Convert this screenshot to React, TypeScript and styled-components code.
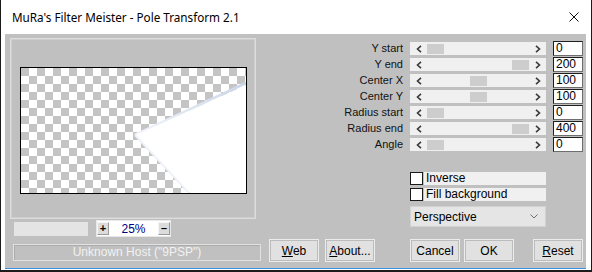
import { Fragment } from 'react';
import styled, { createGlobalStyle } from 'styled-components';

const GlobalStyle = createGlobalStyle`
    html, body {
        margin: 0;
        padding: 0;
        background: #ffffff;
    }
    body {
        font-family: 'Liberation Sans', Arial, sans-serif;
    }
`;

const UI_FONT = `'Liberation Sans', Arial, sans-serif`;

const Window = styled.div`
    width: 592px;
    height: 272px;
    box-sizing: border-box;
    background: #ffffff;
    border: 1px solid #1b1b1b;
    border-top: none;
    border-bottom-width: 2px;
    display: flex;
    flex-direction: column;
`;

const TitleBar = styled.div`
    height: 34px;
    flex: none;
    display: flex;
    align-items: center;
    justify-content: space-between;
    padding: 0 12px 0 11px;
`;

const Title = styled.div`
    font-family: 'Noto Sans', 'Open Sans', sans-serif;
    font-size: 11.7px;
    color: #000000;
`;

const Client = styled.div`
    margin: 0 5px 0 4px;
    height: 230px;
    flex: none;
    background: #c0c0c0;
    border-bottom: 1px solid #3c8edf;
    display: flex;
    flex-direction: column;
    padding-top: 4px;
    box-sizing: content-box;
    font-family: ${UI_FONT};
    font-size: 11px;
    color: #000000;
`;

const Upper = styled.div`
    display: flex;
    height: 199px;
    flex: none;
`;

const LeftPane = styled.div`
    width: 257px;
    box-sizing: border-box;
    padding-left: 5px;
    display: flex;
    flex-direction: column;
`;

const PreviewFrame = styled.div`
    width: 246px;
    height: 182px;
    box-sizing: border-box;
    border: 1px solid #dcdcdc;
    box-shadow: inset 1px 1px 0 #cdcdcd, inset -1px -1px 0 #cdcdcd;
    padding: 28px 0 0 9px;
`;

const Canvas = styled.div`
    width: 227px;
    height: 127px;
    box-sizing: border-box;
    border: 1px solid #000000;
    background-color: #ffffff;
    background-image: conic-gradient(#ffffff 25%, #c4c4c4 0 50%, #ffffff 0 75%, #c4c4c4 0);
    background-size: 16px 16px;

    svg {
        display: block;
    }
`;

const ZoomRow = styled.div`
    margin-top: 1px;
    height: 17px;
    padding-left: 4px;
    display: flex;
    align-items: center;
`;

const Progress = styled.div`
    width: 74px;
    height: 14px;
    background: #e4e4e4;
`;

const ZoomBox = styled.div`
    margin-left: 8px;
    width: 75px;
    height: 17px;
    box-sizing: border-box;
    background: #ffffff;
    border: 1px solid #e8e8e8;
    display: flex;
    align-items: center;
    justify-content: space-between;
`;

const ZoomButton = styled.div`
    width: 12px;
    height: 13px;
    box-sizing: border-box;
    background: #dcdcdc;
    border: 1px solid #9a9a9a;
    border-top-color: #f4f4f4;
    border-left-color: #f4f4f4;
    display: flex;
    align-items: center;
    justify-content: center;
    font-weight: bold;
    font-size: 11px;
    line-height: 1;
`;

const ZoomValue = styled.span`
    color: #000080;
    font-size: 12px;
`;

const RightPane = styled.div`
    flex: 1;
    padding-top: 3px;
    display: flex;
    flex-direction: column;
`;

const SliderGrid = styled.div`
    display: grid;
    grid-template-columns: 141px 136px 30px;
    column-gap: 7px;
    row-gap: 1px;
    grid-auto-rows: 15px;
    align-items: center;
`;

const SliderLabel = styled.div`
    text-align: right;
    line-height: 15px;
    white-space: nowrap;
    color: #111111;
`;

const Track = styled.div`
    height: 13px;
    background: #f0f0f0;
    display: flex;
    align-items: center;
`;

const ArrowCell = styled.div`
    width: 17px;
    height: 13px;
    flex: none;
    display: flex;
    align-items: center;
    justify-content: center;
`;

const Lane = styled.div`
    flex: 1;
    height: 13px;
    display: flex;
    align-items: center;
`;

const Thumb = styled.div`
    width: 17px;
    height: 10px;
    background: #cdcdcd;
`;

const Edit = styled.div`
    height: 15px;
    box-sizing: border-box;
    background: #ffffff;
    border: 1px solid #1e1e1e;
    border-right-color: #6e6e6e;
    border-bottom-color: #6e6e6e;
    padding-left: 2px;
    line-height: 13px;
    font-size: 12px;
`;

const Options = styled.div`
    margin: 20px 0 0 148px;
    width: 136px;
    display: flex;
    flex-direction: column;
    gap: 2px;
`;

const CheckRow = styled.label`
    display: flex;
    height: 14px;
    gap: 1px;
`;

const CheckBox = styled.span`
    width: 13px;
    height: 13px;
    box-sizing: border-box;
    border: 1px solid #1a1a1a;
    background: #ffffff;
    flex: none;
`;

const CheckLabel = styled.span`
    flex: 1;
    height: 13px;
    background: #f0f0f0;
    padding-left: 2px;
    line-height: 13px;
    font-size: 12px;
`;

const Dropdown = styled.div`
    margin-top: 2px;
    height: 21px;
    box-sizing: border-box;
    background: #e5e5e5;
    border: 1px solid #d2d2d2;
    padding: 0 7px 0 3px;
    display: flex;
    align-items: center;
    justify-content: space-between;
    font-size: 12px;
`;

const BottomRow = styled.div`
    margin-top: 2px;
    height: 23px;
    padding-left: 8px;
    display: flex;
    align-items: flex-start;
`;

const Status = styled.div`
    width: 248px;
    height: 17px;
    margin-top: 5px;
    box-sizing: border-box;
    border: 1px solid #e2e2e2;
    box-shadow: inset 1px 1px 0 #acacac;
    color: #f2f2f2;
    text-align: center;
    line-height: 15px;
    font-size: 12px;
`;

const Button = styled.div<{ $ml: number }>`
    margin-left: ${({ $ml }) => $ml}px;
    width: 50px;
    height: 23px;
    box-sizing: border-box;
    background: #e1e1e1;
    border: 1px solid #ececec;
    box-shadow: inset 0 0 0 1px #bcbcbc;
    display: flex;
    align-items: center;
    justify-content: center;
    font-size: 12px;

    u {
        text-decoration-thickness: 1px;
    }
`;

const Chevron = ({ dir }: { dir: 'left' | 'right' }) => (
    <svg width="6" height="8" viewBox="0 0 6 8">
        <polyline
            points={dir === 'left' ? '5,0.8 1.5,4 5,7.2' : '1,0.8 4.5,4 1,7.2'}
            fill="none"
            stroke="#3a3a3a"
            strokeWidth="1.6"
        />
    </svg>
);

const CloseIcon = () => (
    <svg width="10" height="10" viewBox="0 0 10 10">
        <path d="M0.5 0.5 L9.5 9.5 M9.5 0.5 L0.5 9.5" stroke="#111" strokeWidth="1" />
    </svg>
);

const DropChevron = () => (
    <svg width="8" height="5" viewBox="0 0 8 5">
        <polyline points="0.5,0.5 4,4 7.5,0.5" fill="none" stroke="#707070" strokeWidth="1" />
    </svg>
);

const sliders = [
    { label: 'Y start', value: 0, pos: 0 },
    { label: 'Y end', value: 200, pos: 1 },
    { label: 'Center X', value: 100, pos: 0.5 },
    { label: 'Center Y', value: 100, pos: 0.5 },
    { label: 'Radius start', value: 0, pos: 0 },
    { label: 'Radius end', value: 400, pos: 1 },
    { label: 'Angle', value: 0, pos: 0 },
];

// lane is 102px wide, thumb 17px
const LANE_RANGE = 85;

export default function App() {
    return (
        <>
            <GlobalStyle />
            <Window>
                <TitleBar>
                    <Title>MuRa's Filter Meister - Pole Transform 2.1</Title>
                    <CloseIcon />
                </TitleBar>
                <Client>
                    <Upper>
                        <LeftPane>
                            <PreviewFrame>
                                <Canvas>
                                    <svg width="225" height="125" viewBox="0 0 225 125">
                                        <defs>
                                            <linearGradient id="edge" x1="0" y1="0" x2="1" y2="0">
                                                <stop offset="0" stopColor="#f2f5fa" />
                                                <stop offset="1" stopColor="#c9d6e8" />
                                            </linearGradient>
                                        </defs>
                                        <polyline
                                            points="114,67 225,15"
                                            fill="none"
                                            stroke="url(#edge)"
                                            strokeWidth="2.5"
                                        />
                                        <polyline
                                            points="114,67 168,125"
                                            fill="none"
                                            stroke="#eef2f8"
                                            strokeWidth="2"
                                        />
                                        <polygon points="115,67 225,17 225,125 169,125" fill="#ffffff" />
                                    </svg>
                                </Canvas>
                            </PreviewFrame>
                            <ZoomRow>
                                <Progress />
                                <ZoomBox>
                                    <ZoomButton>+</ZoomButton>
                                    <ZoomValue>25%</ZoomValue>
                                    <ZoomButton>–</ZoomButton>
                                </ZoomBox>
                            </ZoomRow>
                        </LeftPane>
                        <RightPane>
                            <SliderGrid>
                                {sliders.map((s) => (
                                    <Fragment key={s.label}>
                                        <SliderLabel>{s.label}</SliderLabel>
                                        <Track>
                                            <ArrowCell>
                                                <Chevron dir="left" />
                                            </ArrowCell>
                                            <Lane>
                                                <Thumb style={{ marginLeft: s.pos * LANE_RANGE }} />
                                            </Lane>
                                            <ArrowCell>
                                                <Chevron dir="right" />
                                            </ArrowCell>
                                        </Track>
                                        <Edit>{s.value}</Edit>
                                    </Fragment>
                                ))}
                            </SliderGrid>
                            <Options>
                                <CheckRow>
                                    <CheckBox />
                                    <CheckLabel>Inverse</CheckLabel>
                                </CheckRow>
                                <CheckRow>
                                    <CheckBox />
                                    <CheckLabel>Fill background</CheckLabel>
                                </CheckRow>
                                <Dropdown>
                                    <span>Perspective</span>
                                    <DropChevron />
                                </Dropdown>
                            </Options>
                        </RightPane>
                    </Upper>
                    <BottomRow>
                        <Status>Unknown Host ("9PSP")</Status>
                        <Button $ml={8}>
                            <span>
                                <u>W</u>eb
                            </span>
                        </Button>
                        <Button $ml={6}>
                            <span>
                                <u>A</u>bout...
                            </span>
                        </Button>
                        <Button $ml={35}>Cancel</Button>
                        <Button $ml={4}>OK</Button>
                        <Button $ml={19}>
                            <span>
                                <u>R</u>eset
                            </span>
                        </Button>
                    </BottomRow>
                </Client>
            </Window>
        </>
    );
}
